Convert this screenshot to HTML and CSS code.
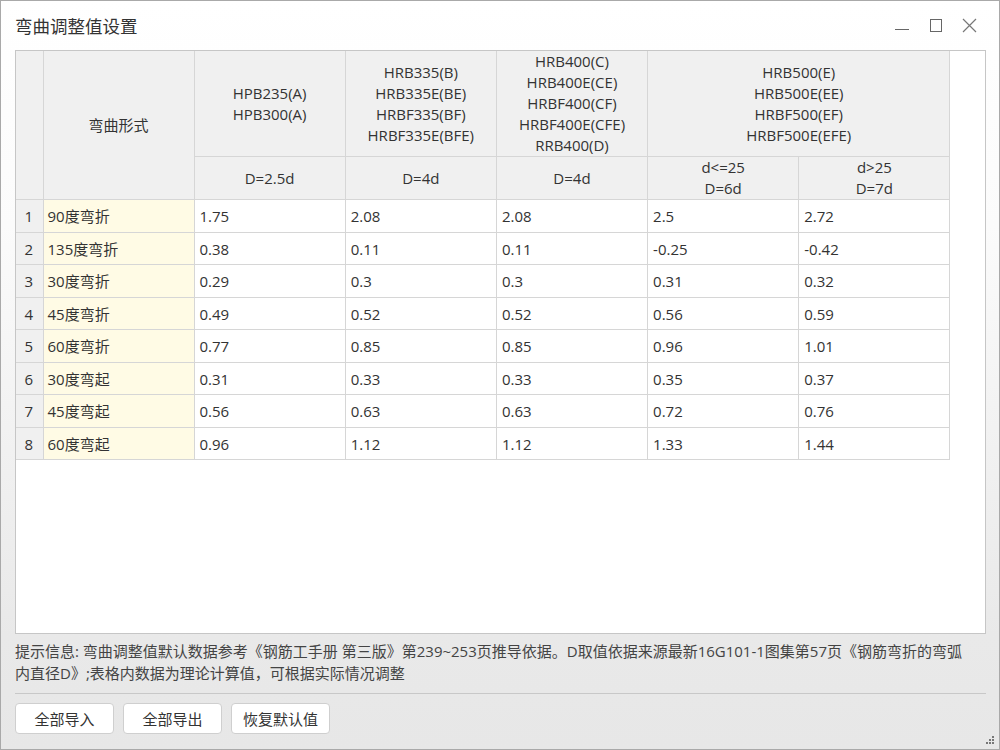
FILE: index.html
```html
<!DOCTYPE html>
<html lang="zh-CN">
<head>
<meta charset="utf-8">
<title>弯曲调整值设置</title>
<link rel="stylesheet" href="styles.css">
</head>
<body>
<div class="window">
  <div class="titlebar">
    <div class="title">弯曲调整值设置</div>
    <div class="controls">
      <svg class="ctl" width="34" height="24" viewBox="0 0 34 24"><line x1="10" y1="15.5" x2="24" y2="15.5" stroke="#666" stroke-width="1"/></svg>
      <svg class="ctl" width="34" height="24" viewBox="0 0 34 24"><rect x="11.5" y="5.5" width="11" height="12" fill="none" stroke="#666" stroke-width="1"/></svg>
      <svg class="ctl" width="34" height="24" viewBox="0 0 34 24"><path d="M10 5 L23 18 M23 5 L10 18" stroke="#777" stroke-width="1.2" fill="none"/></svg>
    </div>
  </div>
  <div class="content">
    <div class="table-panel">
      <table class="grid">
        <colgroup>
          <col class="c-num"><col class="c-name"><col class="c-val"><col class="c-val"><col class="c-val"><col class="c-val"><col class="c-val">
        </colgroup>
        <thead>
          <tr class="h1">
            <th rowspan="2" class="num"></th>
            <th rowspan="2">弯曲形式</th>
            <th>HPB235(A)<br>HPB300(A)</th>
            <th>HRB335(B)<br>HRB335E(BE)<br>HRBF335(BF)<br>HRBF335E(BFE)</th>
            <th>HRB400(C)<br>HRB400E(CE)<br>HRBF400(CF)<br>HRBF400E(CFE)<br>RRB400(D)</th>
            <th colspan="2">HRB500(E)<br>HRB500E(EE)<br>HRBF500(EF)<br>HRBF500E(EFE)</th>
          </tr>
          <tr class="h2">
            <th>D=2.5d</th>
            <th>D=4d</th>
            <th>D=4d</th>
            <th>d&lt;=25<br>D=6d</th>
            <th>d&gt;25<br>D=7d</th>
          </tr>
        </thead>
        <tbody>
          <tr><td class="num">1</td><td class="name">90度弯折</td><td>1.75</td><td>2.08</td><td>2.08</td><td>2.5</td><td>2.72</td></tr>
          <tr><td class="num">2</td><td class="name">135度弯折</td><td>0.38</td><td>0.11</td><td>0.11</td><td>-0.25</td><td>-0.42</td></tr>
          <tr><td class="num">3</td><td class="name">30度弯折</td><td>0.29</td><td>0.3</td><td>0.3</td><td>0.31</td><td>0.32</td></tr>
          <tr><td class="num">4</td><td class="name">45度弯折</td><td>0.49</td><td>0.52</td><td>0.52</td><td>0.56</td><td>0.59</td></tr>
          <tr><td class="num">5</td><td class="name">60度弯折</td><td>0.77</td><td>0.85</td><td>0.85</td><td>0.96</td><td>1.01</td></tr>
          <tr><td class="num">6</td><td class="name">30度弯起</td><td>0.31</td><td>0.33</td><td>0.33</td><td>0.35</td><td>0.37</td></tr>
          <tr><td class="num">7</td><td class="name">45度弯起</td><td>0.56</td><td>0.63</td><td>0.63</td><td>0.72</td><td>0.76</td></tr>
          <tr><td class="num">8</td><td class="name">60度弯起</td><td>0.96</td><td>1.12</td><td>1.12</td><td>1.33</td><td>1.44</td></tr>
        </tbody>
      </table>
    </div>
    <p class="hint">提示信息: 弯曲调整值默认数据参考《钢筋工手册 第三版》第239~253页推导依据。D取值依据来源最新16G101-1图集第57页《钢筋弯折的弯弧<br>内直径D》;表格内数据为理论计算值，可根据实际情况调整</p>
    <div class="sep"></div>
    <div class="buttons">
      <button class="btn">全部导入</button>
      <button class="btn">全部导出</button>
      <button class="btn">恢复默认值</button>
    </div>
  </div>
  <svg class="grip" width="10" height="10" viewBox="0 0 10 10">
    <rect x="7" y="1" width="2" height="2" fill="#777"/>
    <rect x="4" y="4" width="2" height="2" fill="#777"/>
    <rect x="7" y="4" width="2" height="2" fill="#777"/>
    <rect x="1" y="7" width="2" height="2" fill="#777"/>
    <rect x="4" y="7" width="2" height="2" fill="#777"/>
    <rect x="7" y="7" width="2" height="2" fill="#777"/>
  </svg>
</div>
</body>
</html>
```
FILE: styles.css
```css
* { box-sizing: border-box; }
html, body { margin: 0; padding: 0; }
body {
  width: 1000px;
  height: 750px;
  font-family: "Open Sans", "Noto Sans CJK SC", sans-serif;
  font-size: 15px;
  color: #333;
  background: #dcdcdc;
}
.window {
  position: relative;
  width: 1000px;
  height: 750px;
  border: 1px solid #a9a9a9;
  background: linear-gradient(180deg, #ffffff 0%, #fbfbfb 30%, #f1f1f1 60%, #e9e9e9 85%, #e7e7e7 100%);
  display: flex;
  flex-direction: column;
}
.titlebar {
  height: 49px;
  padding: 0 12px 0 14px;
  display: flex;
  align-items: center;
  justify-content: space-between;
}
.title {
  font-size: 17.5px;
  color: #333;
  line-height: 22px;
  margin-top: 0;
}
.controls {
  display: flex;
  align-items: center;
  margin-top: 1px;
}
.ctl { display: block; }
.content {
  padding: 0 13px 0 14px;
  display: flex;
  flex-direction: column;
}
.table-panel {
  height: 584px;
  border: 1px solid #c6c6c6;
  background: #fff;
}
.grid {
  border-collapse: collapse;
  table-layout: fixed;
  width: 934px;
}
.c-num { width: 27px; }
.c-name { width: 151px; }
.c-val { width: 151.2px; }
.grid th, .grid td {
  border: 1px solid #d6d6d6;
  padding: 0;
  font-weight: normal;
  color: #333;
}
.grid tr:first-child th { border-top: none; }
.grid th:first-child, .grid td:first-child { border-left: none; }
.grid th {
  background: #f0f0f0;
  text-align: center;
  line-height: 21px;
}
.h1 th { height: 105px; }
.h2 th { height: 43px; }
.grid td {
  height: 32.5px;
  line-height: 20px;
  padding-left: 5px;
  padding-top: 1px;
  background: #fff;
}
.grid td.num {
  background: #f0f0f0;
  text-align: center;
  padding-left: 0;
  padding-right: 1px;
}
.grid td.name {
  background: #fffbe5;
  padding-left: 4px;
}
.hint {
  margin: 6px 0 0 0;
  line-height: 22px;
  color: #444;
  white-space: nowrap;
}
.sep {
  margin-top: 9px;
  border-top: 1px solid #c8c8c8;
}
.buttons {
  display: flex;
  gap: 9px;
  margin-top: 9px;
}
.btn {
  height: 31px;
  width: 99px;
  border: 1px solid #cfcfcf;
  border-radius: 4px;
  background: #fff;
  font-family: inherit;
  font-size: 15px;
  color: #333;
  padding: 0;
}
.grip {
  position: absolute;
  right: 4px;
  bottom: 4px;
}
```
